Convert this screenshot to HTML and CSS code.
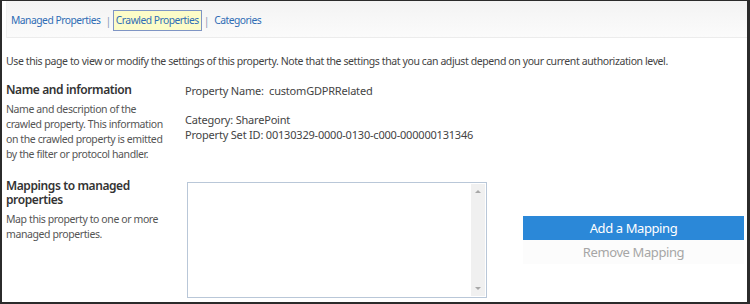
FILE: index.html
```html
<!DOCTYPE html>
<html lang="en">
<head>
  <meta charset="UTF-8" />
  <title>Edit Crawled Property</title>
  <link rel="stylesheet" href="styles.css">
</head>
<body>

<div class="frame">
  <div class="nav">
    <a href="#">Managed Properties</a>
    <span class="sep">|</span>
    <a href="#" class="current">Crawled Properties</a>
    <span class="sep">|</span>
    <a href="#">Categories</a>
  </div>

  <p class="intro">Use this page to view or modify the settings of this property. Note that the settings that you can adjust depend on your current authorization level.</p>

  <div class="section">
    <div class="label">
      <h3>Name and information</h3>
      <p>Name and description of the crawled property. This information on the crawled property is emitted by the filter or protocol handler.</p>
    </div>
    <div class="values">
      <div class="prop-name">Property Name:&nbsp; customGDPRRelated</div>
      <div>Category: SharePoint</div>
      <div>Property Set ID: 00130329-0000-0130-c000-000000131346</div>
    </div>
  </div>

  <div class="section mappings">
    <div class="label">
      <h3>Mappings to managed properties</h3>
      <p>Map this property to one or more managed properties.</p>
    </div>
    <div class="listbox">
      <div class="scrollbar">
        <span class="arrow up"></span>
        <span class="arrow down"></span>
      </div>
    </div>
    <div class="actions">
      <button class="primary">Add a Mapping</button>
      <button class="disabled">Remove Mapping</button>
    </div>
  </div>
</div>

</body>
</html>
```

FILE: styles.css
```css
* {
  box-sizing: border-box;
}

body {
  margin: 0;
  background: #fff;
  font-family: 'Noto Sans', 'Open Sans', sans-serif;
  font-size: 10.5px;
  letter-spacing: -0.4px;
  color: #444;
}

.frame {
  width: 750px;
  height: 304px;
  border: 2px solid #2b2b2b;
  border-top-width: 1px;
  border-right-width: 3px;
  overflow: hidden;
}

.nav {
  margin-left: 4px;
  height: 37px;
  display: flex;
  align-items: center;
  gap: 2px;
  padding: 3px 0 0 1px;
  background: linear-gradient(#f3f3f3, #fbfbfb);
  border-left: 1px solid #f0f0f0;
  border-bottom: 1px solid #ececec;
}

.nav a {
  color: #2f6db5;
  font-size: 10.3px;
  letter-spacing: -0.5px;
  text-decoration: none;
  line-height: 15px;
  padding: 2px 2px;
  border: 1px solid transparent;
}

.nav a.current {
  background: #fcfcc8;
  border-color: #7f95c4;
}

.sep {
  color: #8a9ab5;
}

.intro {
  margin: 15px 0 0 4px;
  line-height: 16px;
}

.section {
  display: grid;
  grid-template-columns: 179px 1fr;
  margin-left: 4px;
  margin-top: 14px;
}

.label h3 {
  margin: 0 0 5px;
  width: 140px;
  font-size: 12px;
  font-weight: 600;
  color: #333;
  line-height: 14px;
}

.label p {
  margin: 0;
  width: 165px;
  line-height: 15px;
  color: #555;
}

.values {
  font-size: 11px;
  letter-spacing: -0.2px;
  line-height: 15px;
  color: #444;
}

.prop-name {
  margin-bottom: 14px;
}

.mappings {
  grid-template-columns: 181px 300px 1fr;
  margin-top: 17px;
}

.listbox {
  height: 116px;
  margin-top: 3px;
  border: 1px solid #b9c7d8;
  background: #fff;
  display: flex;
  justify-content: flex-end;
  padding: 1px;
}

.scrollbar {
  width: 14px;
  background: #f0f0f0;
  display: flex;
  flex-direction: column;
  justify-content: space-between;
  align-items: center;
  padding: 6px 0;
}

.arrow {
  width: 0;
  height: 0;
  border-left: 3px solid transparent;
  border-right: 3px solid transparent;
}

.arrow.up {
  border-bottom: 3px solid #a8a8a8;
}

.arrow.down {
  border-top: 3px solid #a8a8a8;
}

.actions {
  display: flex;
  flex-direction: column;
  margin: 37px 0 0 36px;
  width: 221px;
}

.actions button {
  height: 24px;
  font-family: inherit;
  font-size: 13px;
  letter-spacing: -0.4px;
  border: 1px solid transparent;
  padding: 0;
}

.primary {
  background: #2b88d8;
  border-color: #2a80c8;
  color: #fff;
}

.disabled {
  height: 23px;
  background: #fcfcfc;
  border-color: #e2e2e2;
  color: #a6a6a6;
}
```
